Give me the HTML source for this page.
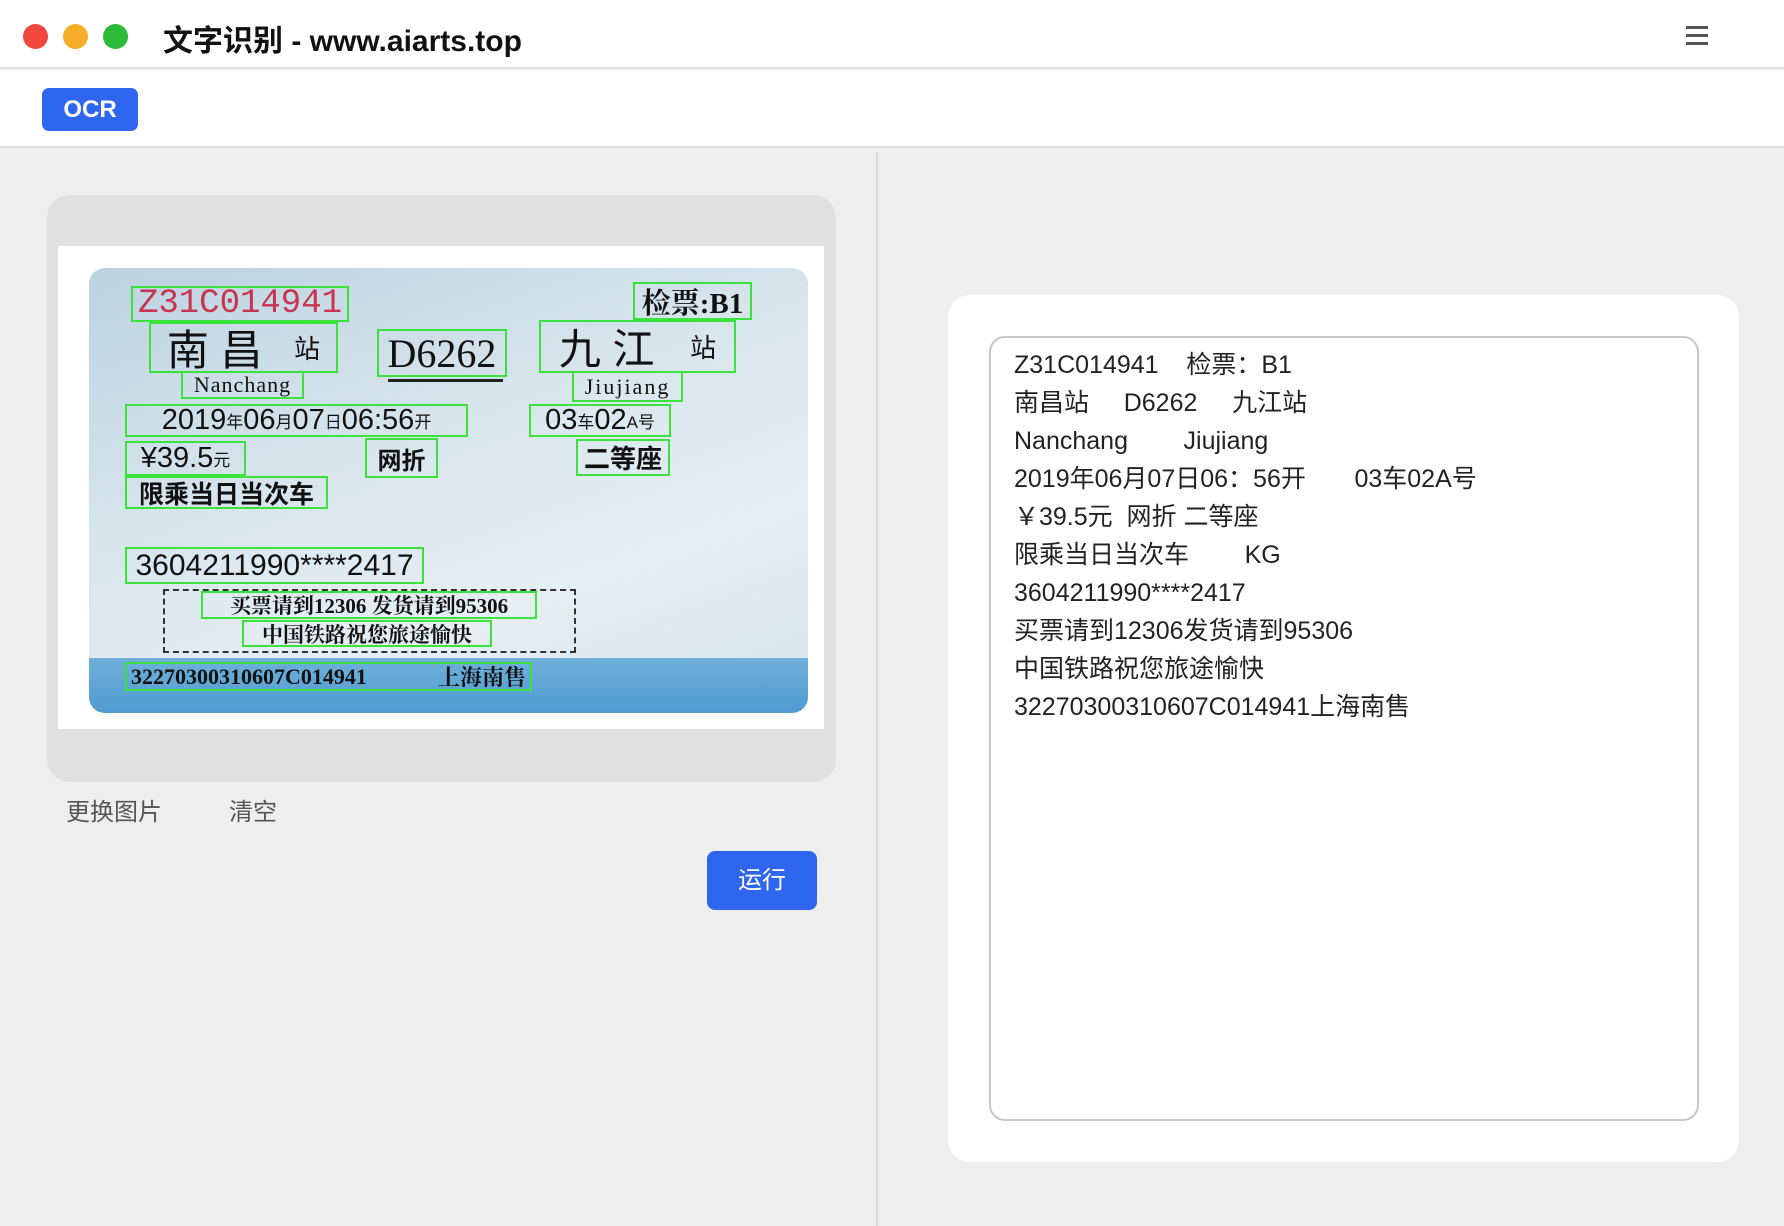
<!DOCTYPE html>
<html><head><meta charset="utf-8"><style>
*{margin:0;padding:0;box-sizing:border-box}
body{width:1784px;height:1226px;position:relative;overflow:hidden;background:#eee;font-family:"Liberation Sans","Noto Sans CJK SC",sans-serif}
.a{position:absolute}
.bx{position:absolute;border:2px solid #3be23b;display:flex;align-items:center;justify-content:center;white-space:nowrap;color:#111;font-family:"Liberation Sans","Noto Sans CJK SC",sans-serif;font-weight:bold;overflow:visible}
.serif{font-family:"Liberation Serif","Noto Serif CJK SC",serif}
.ln{position:absolute;left:1014px;font-size:25px;color:#222;white-space:pre;line-height:38px}
</style></head><body>
<div class="a" style="left:0;top:0;width:1784px;height:69px;background:#fff;border-bottom:2px solid #ddd"></div>
<div class="a" style="left:23px;top:24px;width:25px;height:25px;border-radius:50%;background:#f2473f"></div>
<div class="a" style="left:63px;top:24px;width:25px;height:25px;border-radius:50%;background:#f6ad2a"></div>
<div class="a" style="left:103px;top:24px;width:25px;height:25px;border-radius:50%;background:#2dbb39"></div>
<div class="a" style="left:163px;top:16px;font-size:30px;font-weight:bold;color:#111">文字识别 - www.aiarts.top</div>
<div class="a" style="left:1686px;top:26px;width:22px;height:3px;background:#555;box-shadow:0 8px 0 #555,0 16px 0 #555"></div>
<div class="a" style="left:0;top:70px;width:1784px;height:78px;background:#fff;border-bottom:2px solid #ddd"></div>
<div class="a" style="left:42px;top:88px;width:96px;height:43px;background:#2f66f0;border-radius:7px;color:#fff;font-size:24px;font-weight:bold;text-align:center;line-height:43px">OCR</div>
<div class="a" style="left:876px;top:152px;width:2px;height:1074px;background:#d6d6d6"></div>
<div class="a" style="left:47px;top:195px;width:789px;height:587px;background:#e0e0e0;border-radius:23px"></div>
<div class="a" style="left:58px;top:246px;width:766px;height:483px;background:#fff"></div>
<div class="a" style="left:89px;top:268px;width:719px;height:445px;border-radius:16px;background:linear-gradient(160deg,#bcd3e0,#dbe7ee 45%,#e6eef3 70%,#d4e3ec);overflow:hidden">
 <div class="a" style="left:0;top:390px;width:719px;height:55px;background:linear-gradient(#6fb0da,#4f9bd0)"></div>
</div>
<div class="bx serif" style="left:131px;top:286px;width:218px;height:36px;color:#c8334f;font-size:34px;font-weight:normal;font-family:'Liberation Mono',monospace">Z31C014941</div>
<div class="bx serif" style="left:633px;top:282px;width:119px;height:38px;font-size:29px">检票:B1</div>
<div class="bx" style="left:149px;top:322px;width:189px;height:51px;font-size:42px;font-weight:normal;justify-content:space-around">南 昌<span style="font-size:26px">站</span></div>
<div class="bx serif" style="left:377px;top:329px;width:130px;height:48px;font-size:40px;font-weight:normal">D6262</div>
<div class="a" style="left:388px;top:379px;width:115px;height:3px;background:#222"></div>
<div class="bx" style="left:539px;top:320px;width:197px;height:53px;font-size:42px;font-weight:normal;justify-content:space-around">九 江<span style="font-size:26px">站</span></div>
<div class="bx serif" style="left:181px;top:371px;width:123px;height:28px;font-size:22px;font-weight:normal;letter-spacing:1px">Nanchang</div>
<div class="bx serif" style="left:572px;top:371px;width:111px;height:31px;font-size:22px;font-weight:normal;letter-spacing:2px">Jiujiang</div>
<div class="bx" style="left:125px;top:404px;width:343px;height:33px;font-size:29px;font-weight:normal">2019<small style="font-size:17px">年</small>06<small style="font-size:17px">月</small>07<small style="font-size:17px">日</small> 06:56<small style="font-size:17px">开</small></div>
<div class="bx" style="left:529px;top:404px;width:142px;height:33px;font-size:29px;font-weight:normal">03<small style="font-size:17px">车</small>02<small style="font-size:17px">A号</small></div>
<div class="bx" style="left:125px;top:441px;width:121px;height:35px;font-size:29px;font-weight:normal">¥39.5<small style="font-size:17px">元</small></div>
<div class="bx" style="left:365px;top:438px;width:73px;height:40px;font-size:24px">网折</div>
<div class="bx" style="left:576px;top:439px;width:94px;height:37px;font-size:26px">二等座</div>
<div class="bx" style="left:125px;top:476px;width:203px;height:33px;font-size:25px">限乘当日当次车</div>
<div class="bx" style="left:125px;top:547px;width:299px;height:37px;font-size:30px;font-weight:normal">3604211990****2417</div>
<div class="a" style="left:163px;top:589px;width:413px;height:64px;border:2px dashed #333"></div>
<div class="bx serif" style="left:201px;top:591px;width:336px;height:28px;font-size:21px">买票请到12306 发货请到95306</div>
<div class="bx serif" style="left:242px;top:620px;width:250px;height:27px;font-size:21px">中国铁路祝您旅途愉快</div>
<div class="bx serif" style="left:125px;top:662px;width:407px;height:29px;font-size:22px;justify-content:space-between;padding:0 4px">32270300310607C014941 <span>上海南售</span></div>
<div class="a" style="left:66px;top:792px;font-size:24px;color:#555">更换图片</div>
<div class="a" style="left:229px;top:792px;font-size:24px;color:#555">清空</div>
<div class="a" style="left:707px;top:851px;width:110px;height:59px;background:#2f66f0;border-radius:8px;color:#fff;font-size:24px;text-align:center;line-height:59px">运行</div>
<div class="a" style="left:948px;top:295px;width:791px;height:867px;background:#fff;border-radius:22px"></div>
<div class="a" style="left:989px;top:336px;width:710px;height:785px;border:2px solid #c8c8c8;border-radius:16px"></div>
<div class="ln" style="top:346px">Z31C014941    检票：B1</div>
<div class="ln" style="top:384px">南昌站     D6262     九江站</div>
<div class="ln" style="top:422px">Nanchang        Jiujiang</div>
<div class="ln" style="top:460px">2019年06月07日06：56开       03车02A号</div>
<div class="ln" style="top:498px">￥39.5元  网折 二等座</div>
<div class="ln" style="top:536px">限乘当日当次车        KG</div>
<div class="ln" style="top:574px">3604211990****2417</div>
<div class="ln" style="top:612px">买票请到12306发货请到95306</div>
<div class="ln" style="top:650px">中国铁路祝您旅途愉快</div>
<div class="ln" style="top:688px">32270300310607C014941上海南售</div>
</body></html>
